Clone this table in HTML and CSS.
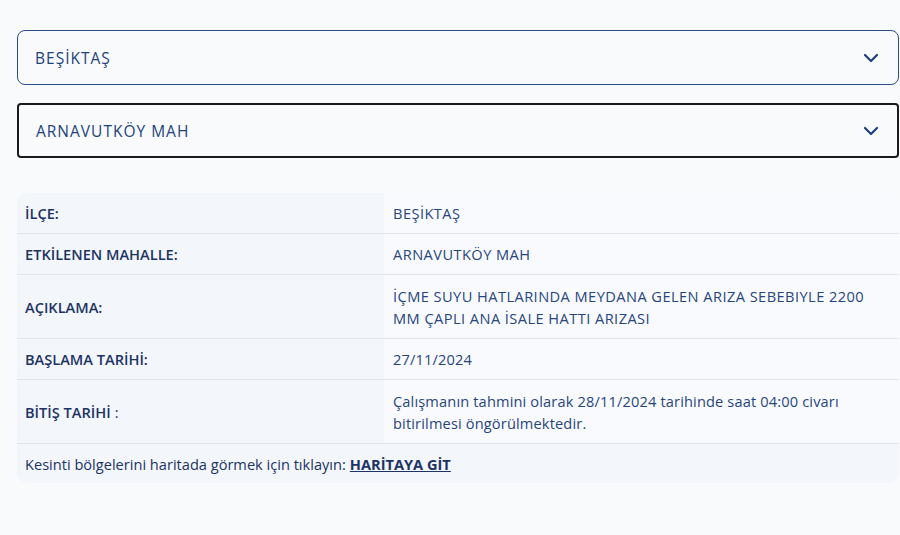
FILE: index.html
```html
<!DOCTYPE html>
<html lang="tr">
<head>
<meta charset="utf-8">
<link rel="stylesheet" href="styles.css">
</head>
<body>
<div class="page">
  <div class="select select-district">
    <span class="select-text">BEŞİKTAŞ</span>
    <svg class="chev" width="16" height="10" viewBox="0 0 16 10"><path d="M2 2 L8 8 L14 2" fill="none" stroke="#1d3f7a" stroke-width="2.2" stroke-linecap="round" stroke-linejoin="round"/></svg>
  </div>
  <div class="select select-hood">
    <span class="select-text">ARNAVUTKÖY MAH</span>
    <svg class="chev" width="16" height="10" viewBox="0 0 16 10"><path d="M2 2 L8 8 L14 2" fill="none" stroke="#1d3f7a" stroke-width="2.2" stroke-linecap="round" stroke-linejoin="round"/></svg>
  </div>
  <div class="info">
    <div class="row">
      <div class="label">İLÇE:</div>
      <div class="value caps">BEŞİKTAŞ</div>
    </div>
    <div class="row">
      <div class="label">ETKİLENEN MAHALLE:</div>
      <div class="value caps">ARNAVUTKÖY MAH</div>
    </div>
    <div class="row tall">
      <div class="label">AÇIKLAMA:</div>
      <div class="value caps">İÇME SUYU HATLARINDA MEYDANA GELEN ARIZA SEBEBIYLE 2200 MM ÇAPLI ANA İSALE HATTI ARIZASI</div>
    </div>
    <div class="row">
      <div class="label">BAŞLAMA TARİHİ:</div>
      <div class="value">27/11/2024</div>
    </div>
    <div class="row tall">
      <div class="label">BİTİŞ TARİHİ <span class="thin">:</span></div>
      <div class="value">Çalışmanın tahmini olarak 28/11/2024 tarihinde saat 04:00 civarı bitirilmesi öngörülmektedir.</div>
    </div>
    <div class="foot">Kesinti bölgelerini haritada görmek için tıklayın: <a class="maplink" href="#">HARİTAYA GİT</a></div>
  </div>
</div>
</body>
</html>
```
FILE: styles.css
```css
html, body {
  margin: 0;
  padding: 0;
  background: #f9fafc;
}
body {
  font-family: "Open Sans", "Noto Sans", sans-serif;
  color: #1e3669;
}
.page {
  padding: 30px 1px 52px 17px;
}
.select {
  display: flex;
  align-items: center;
  justify-content: space-between;
  box-sizing: border-box;
  height: 55px;
  background: #f9fafc;
}
.select-district {
  border: 1px solid #2a4d8c;
  border-radius: 8px;
  padding: 0 19px 0 17px;
}
.select-hood {
  margin-top: 18px;
  border: 2px solid #1b1b1b;
  border-radius: 4px;
  padding: 0 18px 0 17px;
}
.select-text {
  font-size: 15.5px;
  letter-spacing: 1px;
  color: #23427a;
}
.chev {
  display: block;
}
.info {
  margin-top: 35px;
  border-radius: 10px;
  overflow: hidden;
  background: #f3f6fb;
  font-size: 14.6px;
}
.row {
  display: grid;
  grid-template-columns: 367px 1fr;
  border-bottom: 1px solid #e2e6ec;
}
.row > div {
  display: flex;
  align-items: center;
  min-height: 40px;
  box-sizing: border-box;
  padding: 9px 8px;
  line-height: 22px;
}
.row.tall > div {
  min-height: 63px;
}
.label {
  background: #f3f6fb;
  font-weight: 600;
  color: #1c3464;
}
.label .thin {
  font-weight: 400;
  margin-left: 4px;
}
.value {
  background: #f9fafd;
  padding-left: 9px !important;
  padding-right: 20px !important;
  color: #27467d;
  letter-spacing: 0.15px;
}
.value.caps {
  letter-spacing: 0.45px;
}
.foot {
  height: 39px;
  display: flex;
  align-items: center;
  padding: 0 8px;
  color: #1c3464;
}
.maplink {
  color: #1c3464;
  font-weight: 700;
  text-decoration: underline;
  margin-left: 4px;
}
```
